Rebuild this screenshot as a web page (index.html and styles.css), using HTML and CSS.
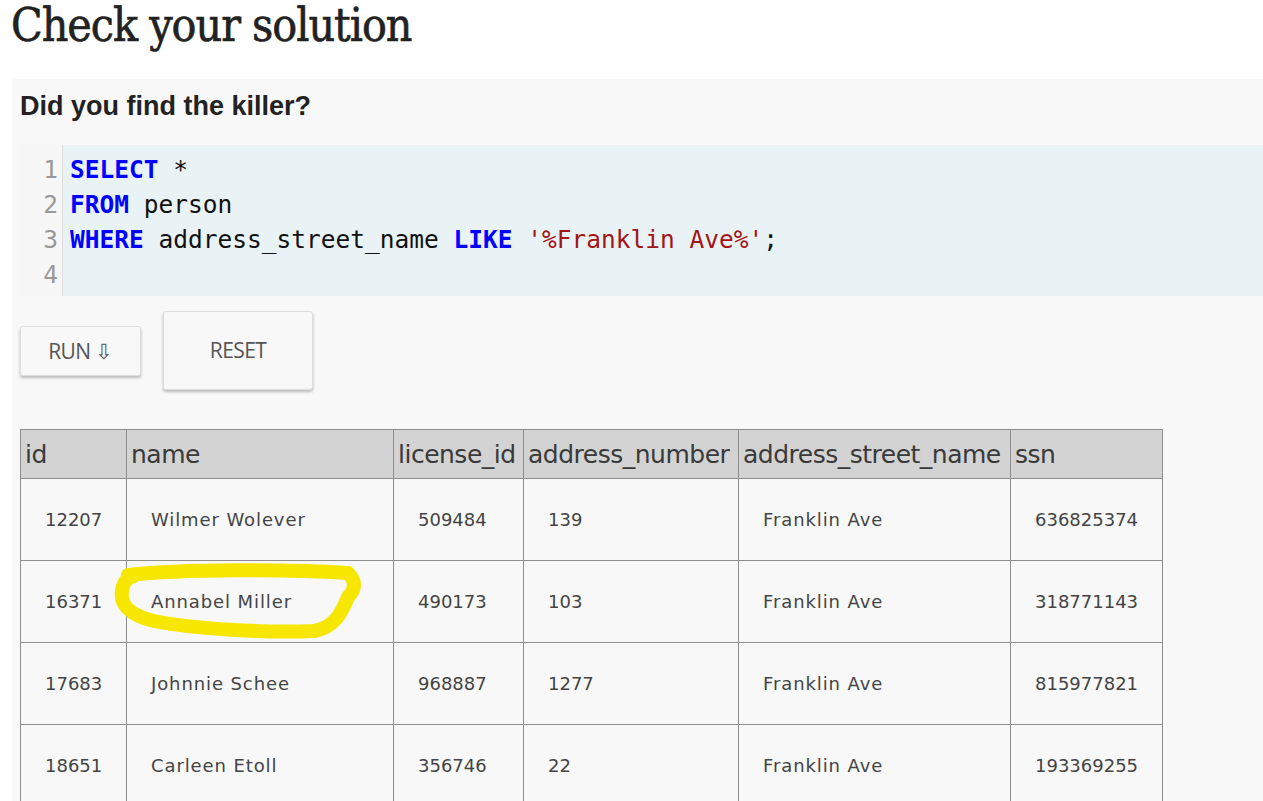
FILE: index.html
```html
<!DOCTYPE html>
<html>
<head>
<meta charset="utf-8">
<link rel="stylesheet" href="styles.css">
</head>
<body>
<h1 class="title">Check your solution</h1>
<section class="panel">
  <h2 class="question">Did you find the killer?</h2>
  <div class="editor">
    <div class="gutter">
      <div class="ln">1</div><div class="ln">2</div><div class="ln">3</div><div class="ln">4</div>
    </div>
    <div class="code">
      <div class="line"><span class="kw">SELECT</span> *</div>
      <div class="line"><span class="kw">FROM</span> person</div>
      <div class="line"><span class="kw">WHERE</span> address_street_name <span class="kw">LIKE</span> <span class="str">'%Franklin Ave%'</span>;</div>
      <div class="line">&nbsp;</div>
    </div>
  </div>
  <div class="actions">
    <button class="btn btn-run">RUN ⇩</button>
    <button class="btn btn-reset">RESET</button>
  </div>
  <div class="results">
    <table class="grid">
      <colgroup>
        <col class="c-id"><col class="c-name"><col class="c-lic"><col class="c-num"><col class="c-street"><col class="c-ssn">
      </colgroup>
      <thead>
        <tr><th>id</th><th>name</th><th>license_id</th><th>address_number</th><th>address_street_name</th><th>ssn</th></tr>
      </thead>
      <tbody>
        <tr><td>12207</td><td class="txt">Wilmer Wolever</td><td>509484</td><td>139</td><td class="txt">Franklin Ave</td><td>636825374</td></tr>
        <tr><td>16371</td><td class="txt">Annabel Miller</td><td>490173</td><td>103</td><td class="txt">Franklin Ave</td><td>318771143</td></tr>
        <tr><td>17683</td><td class="txt">Johnnie Schee</td><td>968887</td><td>1277</td><td class="txt">Franklin Ave</td><td>815977821</td></tr>
        <tr><td>18651</td><td class="txt">Carleen Etoll</td><td>356746</td><td>22</td><td class="txt">Franklin Ave</td><td>193369255</td></tr>
      </tbody>
    </table>
    <svg class="scribble" width="260" height="90" viewBox="0 0 260 90">
      <path d="M14 14 C 70 8, 170 8, 234 12 C 242 20, 242 28, 234 36 C 228 50, 222 66, 200 70 C 150 72, 80 68, 40 60 C 14 54, 6 42, 8 30 C 9 22, 12 17, 20 15" fill="none" stroke="#f7e600" stroke-width="14" stroke-linecap="round" stroke-linejoin="round"/>
    </svg>
  </div>
</section>
</body>
</html>
```
FILE: styles.css
```css
html, body {
  margin: 0;
  padding: 0;
  background: #ffffff;
  overflow: hidden;
}
body {
  padding-left: 11px;
  height: 801px;
}
.title {
  margin: 0;
  height: 79px;
  font-family: "DejaVu Serif Condensed", "DejaVu Serif", serif;
  font-weight: normal;
  font-size: 46px;
  line-height: 50px;
  color: #222;
  letter-spacing: -1px;
  -webkit-text-stroke: 0.6px #222;
}
.panel {
  background: #f8f8f8;
  border-radius: 4px 0 0 0;
  padding: 12px 0 0 8px;
  height: 740px;
  margin-left: 1px;
}
.question {
  margin: 0 0 24px 0;
  font-family: "Liberation Sans", Arial, sans-serif;
  font-weight: bold;
  font-size: 27px;
  line-height: 30px;
  color: #222;
}
.editor {
  display: flex;
  background: #e9f2f5;
  height: 151px;
  font-family: "DejaVu Sans Mono", monospace;
  font-size: 24.5px;
  line-height: 35px;
}
.gutter {
  width: 42px;
  background: #f7f7f7;
  border-right: 1px solid #dddddd;
  padding-top: 7px;
  text-align: right;
  color: #999;
}
.ln {
  padding-right: 4px;
}
.code {
  padding-left: 7px;
  padding-top: 7px;
  color: #111;
}
.line {
  white-space: pre;
}
.kw {
  color: #0000ff;
  font-weight: bold;
}
.str {
  color: #a31515;
}
.actions {
  display: flex;
  align-items: center;
  gap: 22px;
  padding-top: 15px;
  height: 80px;
}
.btn {
  font-family: "Open Sans", "Liberation Sans", sans-serif;
  font-size: 21px;
  color: #555;
  background: #f8f8f8;
  border: 1px solid #dedede;
  border-radius: 3px;
  box-shadow: 0 2px 3px rgba(0,0,0,0.25);
  letter-spacing: -0.6px;
  padding: 0;
}
.btn-run {
  width: 121px;
  height: 50px;
}
.btn-reset {
  width: 150px;
  height: 79px;
  margin-top: -2px;
}
.results {
  position: relative;
  margin-top: 38px;
}
.grid {
  border-collapse: collapse;
  table-layout: fixed;
  width: 1143px;
  font-family: "DejaVu Sans", sans-serif;
  color: #444;
}
.c-id { width: 106px; }
.c-name { width: 267px; }
.c-lic { width: 130px; }
.c-num { width: 215px; }
.c-street { width: 272px; }
.c-ssn { width: 152px; }
.grid th {
  background: #d3d3d3;
  border: 1px solid #8e8e8e;
  height: 48px;
  padding: 0 4px;
  text-align: left;
  font-weight: normal;
  font-size: 25px;
  letter-spacing: -0.5px;
  color: #3a3a3a;
  white-space: nowrap;
  overflow: hidden;
}
.grid td {
  border: 1px solid #8e8e8e;
  height: 81px;
  padding: 0 0 0 24px;
  font-size: 18px;
  color: #444;
  white-space: nowrap;
}
.grid td.txt {
  letter-spacing: 0.9px;
}
.scribble {
  position: absolute;
  left: 94px;
  top: 132px;
}
```
